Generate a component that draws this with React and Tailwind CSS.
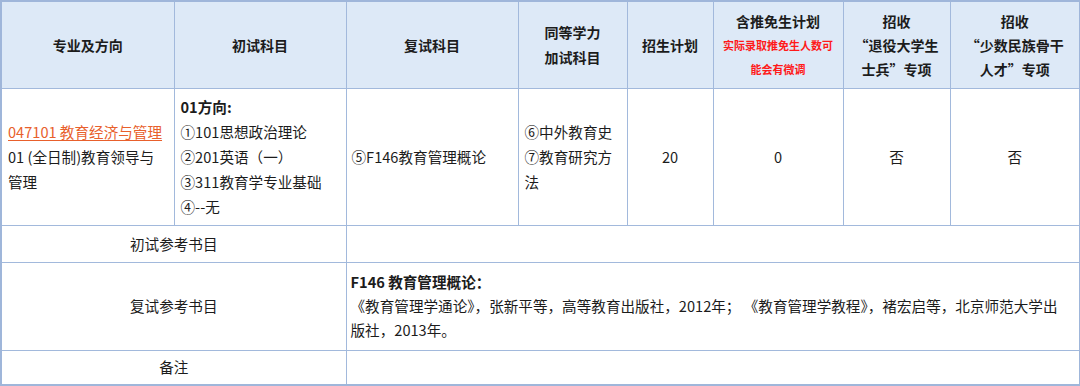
import React from 'react'

const cell = 'border border-[#a2b9dc] align-middle'
const head = `${cell} bg-[#dde9f7] font-bold text-center text-[14px] leading-[24px]`

export default function App() {
  return (
    <div className="w-[1080px] h-[386px] bg-white text-[#1c1c1c] text-[14.6px] font-['Noto_Sans_CJK_SC','Noto_Sans',sans-serif]">
      <table className="table-fixed border-collapse w-[1079px] border-2 border-[#9fb6da]">
        <colgroup>
          <col className="w-[173px]" />
          <col className="w-[172px]" />
          <col className="w-[172px]" />
          <col className="w-[109px]" />
          <col className="w-[86px]" />
          <col className="w-[130px]" />
          <col className="w-[107px]" />
          <col className="w-[130px]" />
        </colgroup>
        <tbody>
          {/* 表头 */}
          <tr className="h-[87px]">
            <td className={head}>专业及方向</td>
            <td className={head}>初试科目</td>
            <td className={head}>复试科目</td>
            <td className={`${head} leading-[25px]`}>同等学力<br />加试科目</td>
            <td className={head}>招生计划</td>
            <td className={head}>
              含推免生计划
              <div className="text-[11px] text-[#ff1a1a] leading-[24px]">
                实际录取推免生人数可<br />能会有微调
              </div>
            </td>
            <td className={head}>招收<br />“退役大学生<br />士兵”专项</td>
            <td className={head}>招收<br />“少数民族骨干<br />人才”专项</td>
          </tr>

          {/* 专业 */}
          <tr className="h-[137px] leading-[25px]">
            <td className={`${cell} px-[6px]`}>
              <span className="text-[#e8602c] underline underline-offset-2">047101 教育经济与管理</span>
              <br />01 (全日制)教育领导与<br />管理
            </td>
            <td className={`${cell} px-[6px]`}>
              <div className="font-bold">01方向:</div>
              <div>①101思想政治理论</div>
              <div>②201英语（一）</div>
              <div>③311教育学专业基础</div>
              <div>④--无</div>
            </td>
            <td className={`${cell} px-[5px]`}>⑤F146教育管理概论</td>
            <td className={`${cell} px-[6px]`}>⑥中外教育史<br />⑦教育研究方<br />法</td>
            <td className={`${cell} text-center`}>20</td>
            <td className={`${cell} text-center`}>0</td>
            <td className={`${cell} text-center`}>否</td>
            <td className={`${cell} text-center`}>否</td>
          </tr>

          <tr className="h-[37px]">
            <td colSpan={2} className={`${cell} text-center`}>初试参考书目</td>
            <td colSpan={6} className={cell}></td>
          </tr>

          <tr className="h-[88px]">
            <td colSpan={2} className={`${cell} text-center`}>复试参考书目</td>
            <td colSpan={6} className={`${cell} px-[4px] leading-[24px]`}>
              <div className="font-bold">F146 教育管理概论：</div>
              <div className="whitespace-nowrap">
                《教育管理学通论》，张新平等，高等教育出版社，2012年； 《教育管理学教程》，褚宏启等，北京师范大学出<br />
                版社，2013年。
              </div>
            </td>
          </tr>

          <tr className="h-[35px]">
            <td colSpan={2} className={`${cell} text-center`}>备注</td>
            <td colSpan={6} className={cell}></td>
          </tr>
        </tbody>
      </table>
    </div>
  )
}
